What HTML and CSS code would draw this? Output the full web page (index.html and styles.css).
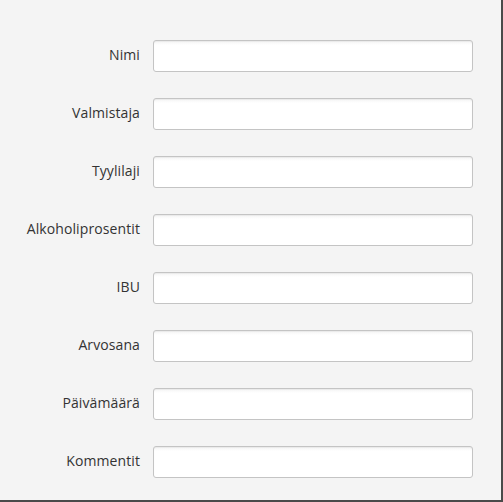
FILE: index.html
```html
<!DOCTYPE html>
<html>
<head>
<meta charset="utf-8">
<link rel="stylesheet" href="styles.css">
</head>
<body>
<div class="frame">
  <form class="form">
    <label class="label">Nimi</label><input class="field" type="text">
    <label class="label">Valmistaja</label><input class="field" type="text">
    <label class="label">Tyylilaji</label><input class="field" type="text">
    <label class="label">Alkoholiprosentit</label><input class="field" type="text">
    <label class="label">IBU</label><input class="field" type="text">
    <label class="label">Arvosana</label><input class="field" type="text">
    <label class="label">Päivämäärä</label><input class="field" type="text">
    <label class="label">Kommentit</label><input class="field" type="text">
  </form>
</div>
</body>
</html>
```
FILE: styles.css
```css
html, body {
  margin: 0;
  padding: 0;
  background: #f4f4f4;
}
.frame {
  width: 501px;
  height: 500px;
  box-sizing: content-box;
  border-right: 2px solid #4a4a4a;
  border-bottom: 2px solid #4a4a4a;
  background: #f4f4f4;
}
.form {
  display: grid;
  grid-template-columns: 140px 320px;
  column-gap: 13px;
  row-gap: 26px;
  padding-top: 40px;
  margin: 0;
  align-items: center;
}
.label {
  justify-self: end;
  padding-bottom: 3px;
  font-family: "Open Sans", "Noto Sans", sans-serif;
  font-size: 14px;
  letter-spacing: 0.1px;
  color: #333;
}
.field {
  width: 320px;
  height: 32px;
  box-sizing: border-box;
  margin: 0;
  border: 1px solid #c4c4c4;
  border-radius: 3px;
  background: linear-gradient(#f5f5f5, #ffffff 4px);
  box-shadow: inset 0 1px 1px rgba(0,0,0,0.05);
  outline: none;
}
```
